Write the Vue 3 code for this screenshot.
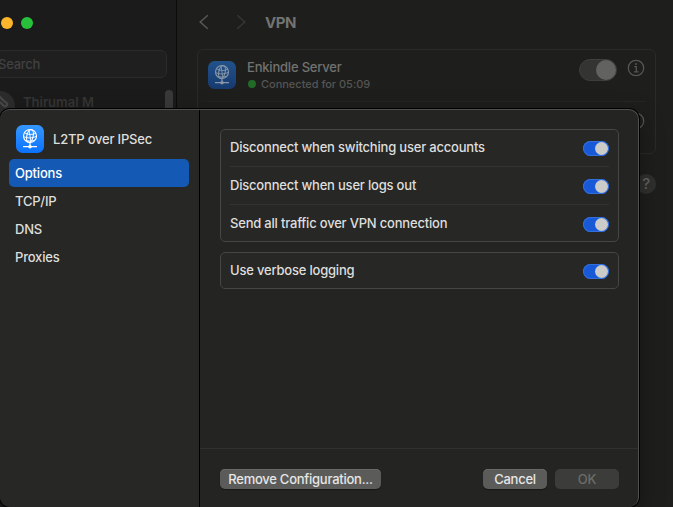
<script setup>
import { ref, h } from 'vue'

const Globe = () =>
  h('svg', { viewBox: '0 0 28 28', fill: 'none', stroke: 'currentColor', 'stroke-width': 1.15 }, [
    h('circle', { cx: 14, cy: 11, r: 6.5 }),
    h('ellipse', { cx: 14, cy: 11, rx: 3.2, ry: 6.5, transform: 'rotate(12 14 11)' }),
    h('path', { d: 'M8.4 7.7Q14 11 20 8.2M7.4 11.6Q14 14.6 20.6 11.2M9.6 15.6Q14 16.7 18.8 15.3M13 4.6L15 17.5', 'stroke-width': 0.9 }),
    h('path', { d: 'M14 17.7V21M7 21.7H21', 'stroke-width': 1.3 }),
    h('circle', { cx: 14, cy: 21.7, r: 1.8, fill: 'currentColor', stroke: 'none' }),
  ])

const tabs = ['Options', 'TCP/IP', 'DNS', 'Proxies']
const active = ref('Options')
const groups = ref([
  [
    { label: 'Disconnect when switching user accounts', on: true },
    { label: 'Disconnect when user logs out', on: true },
    { label: 'Send all traffic over VPN connection', on: true },
  ],
  [{ label: 'Use verbose logging', on: true }],
])
</script>

<template>
  <div class="window">
    <aside class="side">
      <div class="lights"><i class="yellow"></i><i class="green"></i></div>
      <div class="search"><span>Search</span></div>
      <div class="account">
        <svg class="avatar" viewBox="0 0 30 30">
          <circle cx="15" cy="15" r="15" fill="#2c2c2d" />
          <path d="M14 5l6 6M15 11l4 4q2 1 3-1t-2-3" fill="none" stroke="#484848" stroke-width="2.2" />
        </svg>
        <span class="user">Thirumal M</span>
        <i class="scroll"></i>
      </div>
    </aside>

    <main class="main">
      <header class="head">
        <svg class="chev" viewBox="0 0 10 16"><path d="M8.8 1.2L1.2 8L8.8 14.8" /></svg>
        <svg class="chev next" viewBox="0 0 10 16"><path d="M1.2 1.2L8.8 8L1.2 14.8" /></svg>
        <h1>VPN</h1>
      </header>
      <section class="card">
        <div class="server">
          <div class="tile dim"><Globe /></div>
          <div class="info">
            <div class="name">Enkindle Server</div>
            <div class="status"><i></i><span>Connected for 05:09</span></div>
          </div>
          <div class="big-switch"><i></i></div>
          <svg class="info-icon" viewBox="0 0 18 18">
            <circle cx="9" cy="9" r="7.7" />
            <path d="M7.2 7.6H9.3V12.6M6.9 12.8H11.6" />
            <circle class="dot" cx="9" cy="5" r="1" />
          </svg>
        </div>
        <div class="second">
          <svg class="info-icon" viewBox="0 0 18 18">
            <circle cx="9" cy="9" r="7.7" />
          </svg>
        </div>
      </section>
      <div class="help-row"><span class="help">?</span></div>
    </main>

    <div class="sheet">
      <nav class="nav">
        <div class="service">
          <div class="tile"><Globe /></div>
          <span>L2TP over IPSec</span>
        </div>
        <div
          v-for="tab in tabs"
          :key="tab"
          class="tab"
          :class="{ active: tab === active }"
          @click="active = tab"
        >{{ tab }}</div>
      </nav>
      <div class="pane">
        <div class="groups">
          <div v-for="(group, g) in groups" :key="g" class="group">
            <div v-for="item in group" :key="item.label" class="option">
              <span>{{ item.label }}</span>
              <div class="switch" :class="{ on: item.on }" @click="item.on = !item.on"><i></i></div>
            </div>
          </div>
        </div>
        <footer class="foot">
          <button class="remove">Remove Configuration...</button>
          <button class="cancel">Cancel</button>
          <button class="ok" disabled>OK</button>
        </footer>
      </div>
    </div>
  </div>
</template>

<style>
body { background: #1e1e1c; overflow: hidden; }
</style>

<style scoped>
* { box-sizing: border-box; }
.window {
  position: relative;
  display: flex;
  width: 673px;
  height: 507px;
  overflow: hidden;
  background: #1e1e1c;
  font-family: Inter, "Liberation Sans", sans-serif;
  font-size: 13px;
  font-weight: 500;
  letter-spacing: -.2px;
  color: #dededd;
}
.window span, .tab, .name, button { white-space: nowrap; }

.side {
  width: 177px;
  flex: none;
  background: #1b1b1b;
  border-right: 1px solid #0c0c0c;
}
.lights { display: flex; gap: 8px; padding: 17px 0 0 1px; }
.lights i { width: 12px; height: 12px; border-radius: 50%; }
.yellow { background: #fdb62c; }
.green { background: #28c13b; }
.search {
  width: 171px;
  height: 28px;
  margin: 21px 0 0 -4px;
  padding-left: 1px;
  border: 1px solid #2b2b2b;
  border-radius: 6px;
  background: #1f1f1f;
  color: #414141;
  line-height: 27px;
  letter-spacing: -.25px;
}
.account { display: flex; margin-top: 12px; }
.avatar { width: 30px; height: 30px; margin-left: -15px; margin-top: 1px; }
.user { margin-left: 8px; line-height: 25px; font-weight: 600; letter-spacing: 0; color: #353535; }
.scroll { width: 8px; height: 50px; margin-left: auto; margin-right: 3px; border-radius: 4px; background: #393939; }

.main { flex: 1; padding: 0 17px 0 20px; }
.head { display: flex; align-items: center; height: 44px; padding: 0 0 0 2px; }
.chev { width: 10px; height: 16px; fill: none; stroke: #585857; stroke-width: 1.5; }
.next { margin-left: 27px; stroke: #363635; }
h1 { margin: 1px 0 0 19px; font-size: 15px; font-weight: 700; color: #737372; letter-spacing: -.4px; }
.card { height: 105px; margin-top: 5px; border: 1px solid #2a2a29; border-radius: 6px; }
.server { display: flex; align-items: center; height: 52px; margin: 0 9px; border-bottom: 1px solid #252523; }
.tile {
  width: 28px;
  height: 28px;
  border-radius: 6.5px;
  background: linear-gradient(#3597ff, #0a72ff);
  color: #fff;
  flex: none;
}
.tile svg { display: block; width: 28px; height: 28px; }
.dim { margin: -2px 0 0 1px; background: linear-gradient(#22528a, #163a70); color: #8795a6; }
.info { margin-left: 11px; }
.name { color: #727271; line-height: 18px; margin-top: -2px; }
.status { display: flex; align-items: center; gap: 5px; margin-left: 1px; color: #555554; font-size: 11px; line-height: 16px; letter-spacing: -.02px; }
.status i { width: 8px; height: 8px; border-radius: 50%; background: #216b27; }
.big-switch {
  width: 38px;
  height: 22px;
  margin: -11px 0 0 auto;
  border-radius: 11px;
  background: #343433;
  border: 1px solid #3e3e3d;
}
.big-switch i { display: block; width: 20px; height: 20px; margin-left: auto; border-radius: 50%; background: #626261; }
.info-icon { width: 18px; height: 18px; margin: -15px 1px 0 10px; fill: none; stroke: #555554; stroke-width: 1.3; }
.dot { fill: #555554; stroke: none; }
.second { display: flex; justify-content: flex-end; align-items: center; height: 52px; padding: 0 9px 0 0; }
.second .info-icon { margin-top: -15px; }
.help-row { display: flex; justify-content: flex-end; padding-top: 20px; }
.help { width: 20px; height: 20px; border-radius: 50%; background: #30302f; color: #636362; text-align: center; font-size: 15px; line-height: 20px; }

.sheet {
  position: absolute;
  left: 0;
  top: 109px;
  width: 639px;
  height: 398px;
  display: flex;
  overflow: hidden;
  border-radius: 10px;
  background: #242422;
  border: 1px solid #50504f;
  border-left: none;
  border-bottom: none;
  box-shadow: 0 0 0 1px #000, 0 8px 24px rgba(0, 0, 0, .35);
}
.nav { width: 200px; flex: none; padding: 15px 10px 0 9px; background: #272725; border-right: 1px solid #000; }
.service { display: flex; align-items: center; gap: 9px; padding-left: 7px; margin-bottom: 6px; }
.tab { height: 28px; padding-left: 6px; border-radius: 5px; line-height: 28px; }
.active { background: #145ab4; color: #fff; }
.pane { flex: 1; display: flex; flex-direction: column; }
.groups { flex: 1; display: flex; flex-direction: column; gap: 10px; padding: 19px 19px 0 20px; }
.group { border: 1px solid #464645; border-radius: 5px; background: #272725; padding: 0 9px; }
.option {
  display: flex;
  align-items: flex-start;
  justify-content: space-between;
  height: 38px;
  padding-top: 11px;
  line-height: 15px;
  border-bottom: 1px solid #333331;
}
.option:first-child { height: 37px; padding-top: 10px; }
.option:last-child { height: 36px; border-bottom: none; }
.option:only-child { height: 35px; }
.switch { width: 26px; height: 15px; display: flex; margin-top: 1px; border-radius: 8px; background: #454543; }
.switch i { width: 13px; height: 13px; margin: 1px; border-radius: 50%; background: #cbcbca; }
.on { justify-content: flex-end; background: #1759d6; box-shadow: inset 0 0 0 1px #3470dc; }
.foot { display: flex; height: 59px; padding: 20px 19px 0 20px; border-top: 1px solid #30302e; }
button {
  height: 20px;
  padding: 0;
  border: none;
  border-radius: 5px;
  background: #5b5b5a;
  color: #e6e6e5;
  font: inherit;
  letter-spacing: -.25px;
  line-height: 18px;
  box-shadow: inset 0 1px #686867, 0 1px 1px #181817;
}
.remove { width: 161px; margin-right: auto; }
.cancel { width: 64px; margin-right: 8px; }
.ok { width: 64px; background: #3c3c3a; color: #6c6c6b; box-shadow: none; }
</style>
